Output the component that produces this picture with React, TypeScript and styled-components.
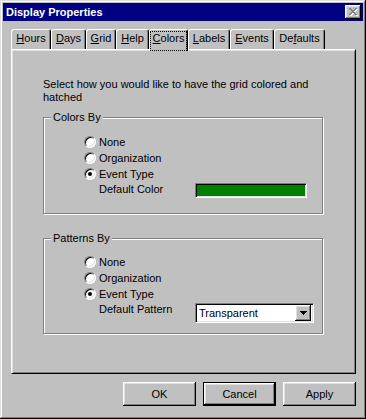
import React from 'react';
import styled, { createGlobalStyle, css } from 'styled-components';

const GlobalStyle = createGlobalStyle`
  html, body {
    margin: 0;
    padding: 0;
    background: #c0c0c0;
  }
  body {
    font-family: "Liberation Sans", Arial, sans-serif;
    font-size: 11px;
    color: #000;
  }
`;

// pixel art helper: '#' marks a filled pixel
const pixelPath = (rows: string[]) =>
  rows
    .flatMap((row, y) => [...row].map((c, x) => (c === '#' ? `M${x} ${y}h1v1h-1z` : '')))
    .join('');

const CLOSE_X = pixelPath([
  '##....##',
  '.##..##.',
  '..####..',
  '...##...',
  '..####..',
  '.##..##.',
  '##....##',
]);

const ARROW = pixelPath(['#######', '.#####.', '..###..', '...#...']);

const raised = css`
  background: #c0c0c0;
  box-shadow: inset -1px -1px #000, inset 1px 1px #fff, inset -2px -2px #808080, inset 2px 2px #dfdfdf;
`;

const sunken = css`
  box-sizing: border-box;
  border: 1px solid;
  border-color: #808080 #fff #fff #808080;
  box-shadow: inset 1px 1px #000, inset -1px -1px #dfdfdf;
`;

const Window = styled.div`
  box-sizing: border-box;
  width: 366px;
  height: 419px;
  padding: 3px;
  display: flex;
  flex-direction: column;
  background: #c0c0c0;
  box-shadow: inset -1px -1px #000, inset 1px 1px #dfdfdf, inset -2px -2px #808080, inset 2px 2px #fff;
`;

const TitleBar = styled.div`
  height: 18px;
  display: flex;
  align-items: center;
  justify-content: space-between;
  padding: 0 2px 0 3px;
  background: #000080;
  color: #fff;
  font-weight: bold;
  font-size: 11px;
`;

const CloseButton = styled.div`
  ${raised};
  width: 16px;
  height: 14px;
  display: flex;
  align-items: center;
  justify-content: center;
`;

const Body = styled.div`
  flex: 1;
  display: flex;
  flex-direction: column;
  padding: 8px 7px 10px 8px;
`;

const TabStrip = styled.div`
  display: flex;
  height: 20px;
`;

const Tab = styled.div<{ $width: number; $active?: boolean }>`
  box-sizing: border-box;
  width: ${(p) => p.$width}px;
  height: ${(p) => (p.$active ? 22 : 20)}px;
  margin-bottom: ${(p) => (p.$active ? -2 : 0)}px;
  z-index: ${(p) => (p.$active ? 1 : 0)};
  display: flex;
  justify-content: center;
  padding-top: ${(p) => (p.$active ? 1 : 2)}px;
  line-height: 13px;
  background: #c0c0c0;
  border-top: 1px solid #fff;
  border-left: 1px solid #fff;
  border-right: 1px solid #000;
  border-radius: 3px 3px 0 0;
  box-shadow: inset -1px 0 #808080;
`;

const FocusLabel = styled.span`
  border: 1px dotted #000;
  padding: 0 2px;
`;

const Panel = styled.div`
  flex: 1;
  box-sizing: border-box;
  display: flex;
  flex-direction: column;
  padding: 28px 32px 0 31px;
  border: 1px solid;
  border-color: #fff #000 #000 #fff;
  box-shadow: inset 1px 1px #dfdfdf, inset -1px -1px #808080;
`;

const Description = styled.p`
  margin: 0;
  line-height: 13px;
`;

const GroupBox = styled.fieldset<{ $top: number; $padTop: number; $padBottom: number }>`
  margin: ${(p) => p.$top}px 0 0;
  padding: ${(p) => p.$padTop}px 0 ${(p) => p.$padBottom}px;
  border: 1px solid #808080;
  box-shadow: inset 1px 1px #fff, 1px 1px #fff;
  min-width: 0;
`;

const Legend = styled.legend`
  margin-left: 7px;
  padding: 0 2px;
  line-height: 13px;
  background: #c0c0c0;
`;

const RadioRow = styled.div`
  height: 16px;
  display: flex;
  align-items: center;
  gap: 3px;
  padding-left: 40px;
`;

const Radio = styled.span<{ $checked?: boolean }>`
  box-sizing: border-box;
  width: 12px;
  height: 12px;
  border-radius: 50%;
  border: 1px solid;
  border-color: #808080 #fff #fff #808080;
  background: #fff;
  box-shadow: inset 1px 1px #000, inset -1px -1px #dfdfdf;
  display: flex;
  align-items: center;
  justify-content: center;

  &::after {
    content: '';
    width: 4px;
    height: 4px;
    border-radius: 50%;
    background: ${(p) => (p.$checked ? '#000' : 'transparent')};
  }
`;

const DefaultRow = styled.div`
  display: flex;
  align-items: flex-start;
  margin-top: 1px;
  padding-left: 55px;
`;

const DefaultLabel = styled.span`
  width: 96px;
  line-height: 13px;
`;

const ColorSwatch = styled.div<{ $color: string }>`
  ${sunken};
  width: 112px;
  height: 15px;
  background: ${(p) => p.$color};
`;

const Combo = styled.div`
  ${sunken};
  width: 119px;
  height: 20px;
  padding: 2px;
  display: flex;
  align-items: center;
  background: #fff;
`;

const ComboText = styled.span`
  flex: 1;
  padding-left: 1px;
`;

const ComboButton = styled.div`
  ${raised};
  width: 16px;
  height: 16px;
  display: flex;
  align-items: center;
  justify-content: center;
`;

const ButtonRow = styled.div`
  display: flex;
  justify-content: flex-end;
  gap: 7px;
  margin-top: 8px;
`;

const Button = styled.button<{ $default?: boolean }>`
  ${raised};
  box-sizing: border-box;
  width: 73px;
  height: 24px;
  padding: 0;
  border: ${(p) => (p.$default ? '1px solid #000' : 'none')};
  font: inherit;
  color: #000;
`;

const tabs = [
  { pre: '', key: 'H', post: 'ours', width: 40 },
  { pre: '', key: 'D', post: 'ays', width: 35 },
  { pre: '', key: 'G', post: 'rid', width: 30 },
  { pre: '', key: 'H', post: 'elp', width: 33 },
  { pre: '', key: 'C', post: 'olors', width: 39, active: true },
  { pre: '', key: 'L', post: 'abels', width: 42 },
  { pre: '', key: 'E', post: 'vents', width: 44 },
  { pre: 'De', key: 'f', post: 'aults', width: 51 },
];

const choices = ['None', 'Organization', 'Event Type'];

function RadioGroup({ checked }: { checked: number }) {
  return (
    <>
      {choices.map((c, i) => (
        <RadioRow key={c}>
          <Radio $checked={i === checked} />
          {c}
        </RadioRow>
      ))}
    </>
  );
}

export default function App() {
  return (
    <>
      <GlobalStyle />
      <Window>
        <TitleBar>
          Display Properties
          <CloseButton>
            <svg width="9" height="8" viewBox="0 0 9 8" shapeRendering="crispEdges">
              <path d={CLOSE_X} fill="#fff" transform="translate(1 1)" />
              <path d={CLOSE_X} fill="#808080" />
            </svg>
          </CloseButton>
        </TitleBar>
        <Body>
          <TabStrip>
            {tabs.map((t) => {
              const label = (
                <>
                  {t.pre}
                  <u>{t.key}</u>
                  {t.post}
                </>
              );
              return (
                <Tab key={t.pre + t.key + t.post} $width={t.width} $active={t.active}>
                  {t.active ? <FocusLabel>{label}</FocusLabel> : <span>{label}</span>}
                </Tab>
              );
            })}
          </TabStrip>
          <Panel>
            <Description>Select how you would like to have the grid colored and hatched</Description>
            <GroupBox $top={7} $padTop={10} $padBottom={15}>
              <Legend>Colors By</Legend>
              <RadioGroup checked={2} />
              <DefaultRow>
                <DefaultLabel>Default Color</DefaultLabel>
                <ColorSwatch $color="#008000" />
              </DefaultRow>
            </GroupBox>
            <GroupBox $top={18} $padTop={9} $padBottom={10}>
              <Legend>Patterns By</Legend>
              <RadioGroup checked={2} />
              <DefaultRow>
                <DefaultLabel>Default Pattern</DefaultLabel>
                <Combo>
                  <ComboText>Transparent</ComboText>
                  <ComboButton>
                    <svg width="7" height="4" viewBox="0 0 7 4" shapeRendering="crispEdges">
                      <path d={ARROW} fill="#000" />
                    </svg>
                  </ComboButton>
                </Combo>
              </DefaultRow>
            </GroupBox>
          </Panel>
          <ButtonRow>
            <Button>OK</Button>
            <Button $default>Cancel</Button>
            <Button>Apply</Button>
          </ButtonRow>
        </Body>
      </Window>
    </>
  );
}
